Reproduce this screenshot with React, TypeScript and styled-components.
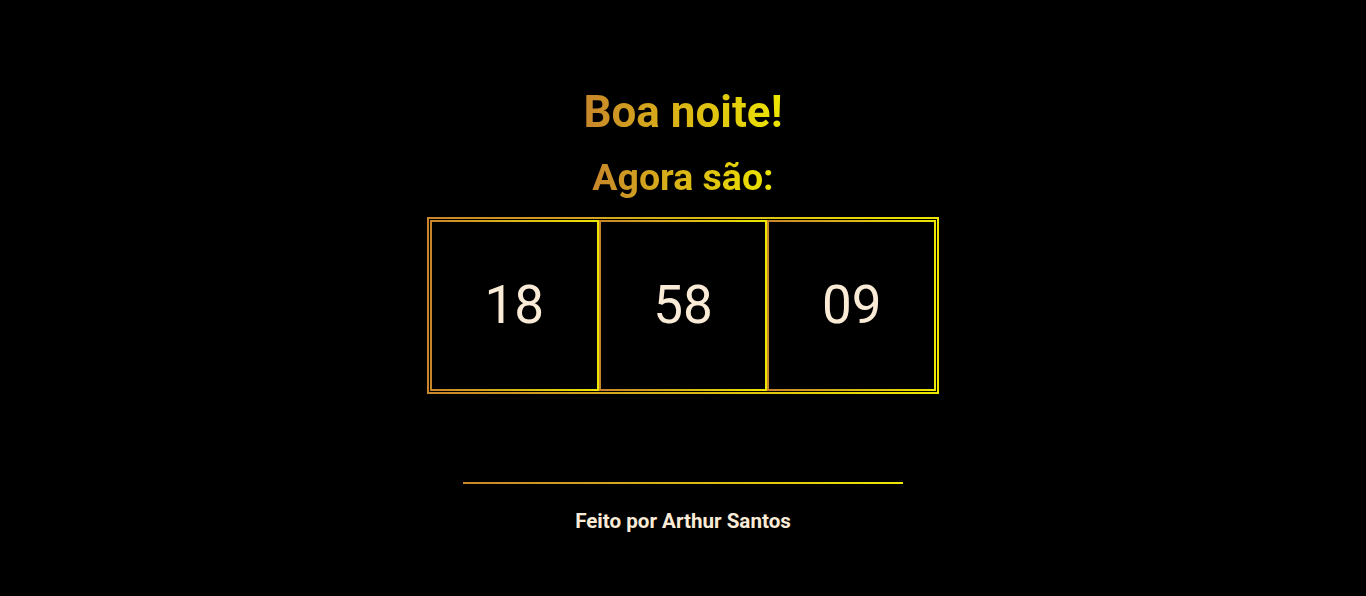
import React from "react";
import styled, { createGlobalStyle } from "styled-components";

const GOLD = "linear-gradient(90deg, #c8862b, #ede600)";

const Global = createGlobalStyle`
  html, body { margin: 0; padding: 0; background: #000; }
  body { font-family: Roboto, "Liberation Sans", sans-serif; }
`;

const Page = styled.main`
  width: 1366px;
  height: 596px;
  background: #000;
  display: flex;
  flex-direction: column;
  align-items: center;
  padding-top: 86px;
  box-sizing: border-box;
`;

const GradientText = styled.h1<{ $size: number }>`
  margin: 0;
  font-size: ${(p) => p.$size}px;
  font-weight: 700;
  line-height: 1.2;
  background: ${GOLD};
  -webkit-background-clip: text;
  background-clip: text;
  color: transparent;
`;

const Subtitle = styled(GradientText).attrs({ as: "h2" })`
  margin-top: 16px;
`;

const Clock = styled.section`
  margin-top: 17px;
  width: 512px;
  padding: 1px;
  display: flex;
  border: 2px solid;
  border-image: ${GOLD} 1;
  box-sizing: border-box;
`;

const Cell = styled.div`
  flex: 1;
  height: 171px;
  box-sizing: border-box;
  border: 2px solid;
  border-image: ${GOLD} 1;
  display: flex;
  align-items: center;
  justify-content: center;
  color: #faebd7;
  font-size: 53px;
  font-weight: 400;
`;

const Divider = styled.hr`
  margin: 88px 0 0;
  width: 440px;
  height: 2px;
  border: none;
  background: ${GOLD};
`;

const Footer = styled.footer`
  margin-top: 25px;
  color: #faebd7;
  font-size: 20.6px;
  font-weight: 700;
`;

export default function App() {
  return (
    <>
      <Global />
      <Page>
        <GradientText $size={44}>Boa noite!</GradientText>
        <Subtitle $size={37.5}>Agora são:</Subtitle>
        <Clock>
          <Cell>18</Cell>
          <Cell>58</Cell>
          <Cell>09</Cell>
        </Clock>
        <Divider />
        <Footer>Feito por Arthur Santos</Footer>
      </Page>
    </>
  );
}
